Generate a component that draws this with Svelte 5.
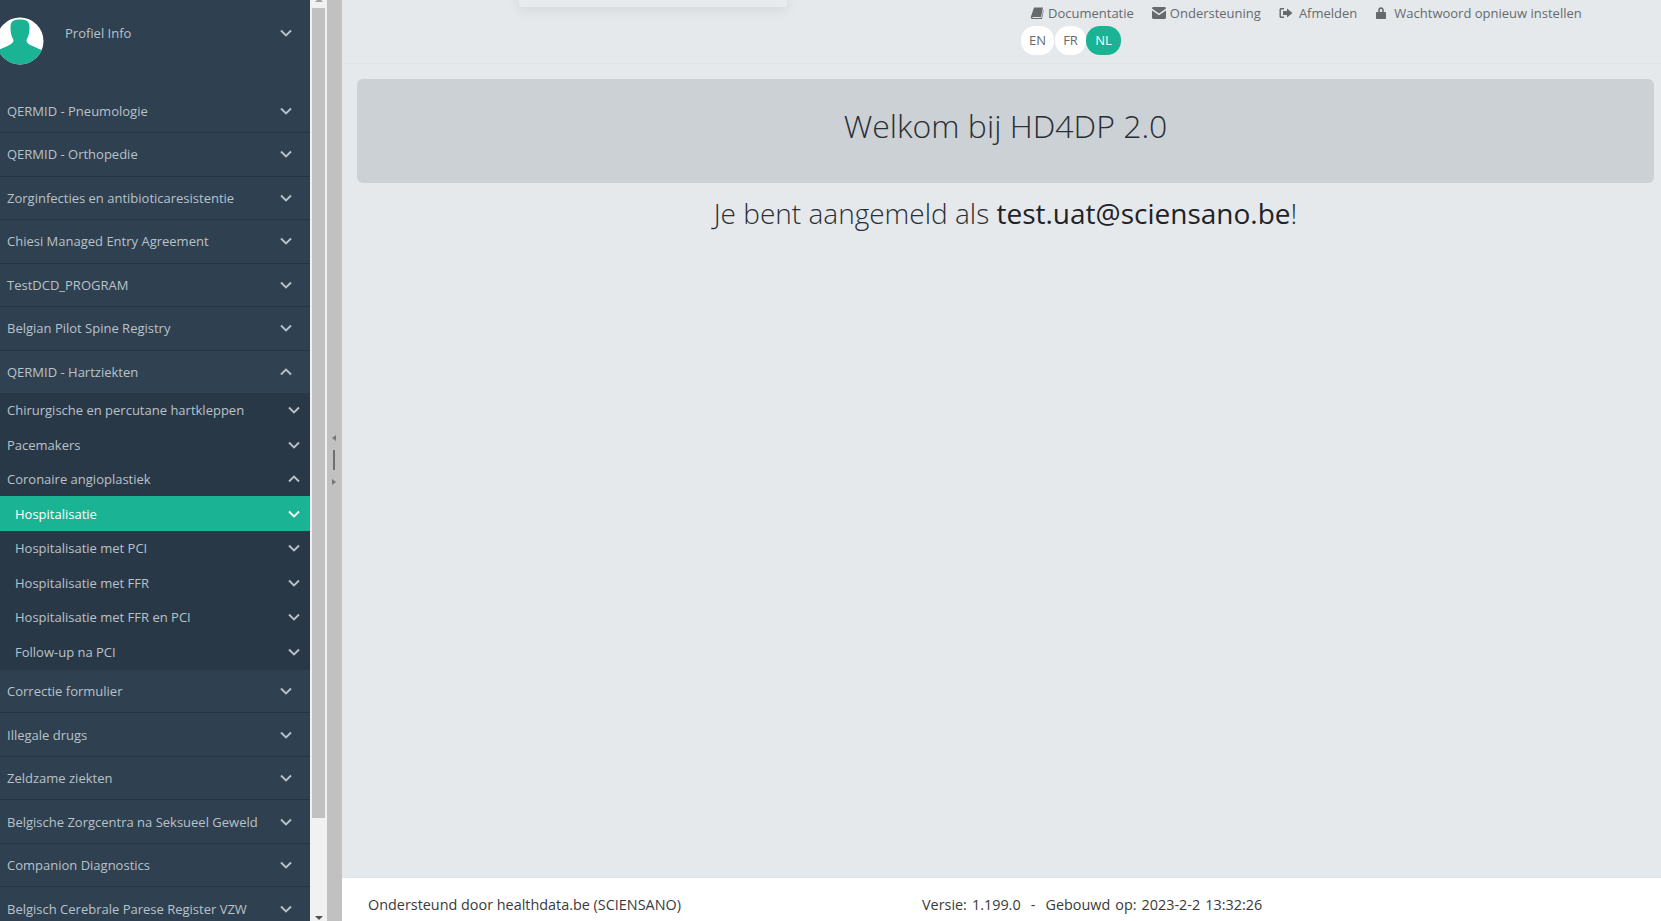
<script>
	const topItems = [
		'QERMID - Pneumologie',
		'QERMID - Orthopedie',
		'Zorginfecties en antibioticaresistentie',
		'Chiesi Managed Entry Agreement',
		'TestDCD_PROGRAM',
		'Belgian Pilot Spine Registry'
	];
	const subItems = [
		{ label: 'Chirurgische en percutane hartkleppen' },
		{ label: 'Pacemakers' },
		{ label: 'Coronaire angioplastiek', open: true },
		{ label: 'Hospitalisatie', nested: true, active: true },
		{ label: 'Hospitalisatie met PCI', nested: true },
		{ label: 'Hospitalisatie met FFR', nested: true },
		{ label: 'Hospitalisatie met FFR en PCI', nested: true },
		{ label: 'Follow-up na PCI', nested: true }
	];
	const bottomItems = [
		'Correctie formulier',
		'Illegale drugs',
		'Zeldzame ziekten',
		'Belgische Zorgcentra na Seksueel Geweld',
		'Companion Diagnostics',
		'Belgisch Cerebrale Parese Register VZW'
	];
</script>

{#snippet chevron(up)}
	<svg class="chevron" viewBox="0 0 12 8" width="12" height="8">
		<polyline points={up ? '1,6.5 6,1.5 11,6.5' : '1,1.5 6,6.5 11,1.5'} fill="none" stroke="currentColor" stroke-width="1.9" />
	</svg>
{/snippet}

<div class="page">
	<aside class="sidebar">
		<div class="profile">
			<svg class="avatar" viewBox="0 0 48 48" width="48" height="48">
				<defs>
					<clipPath id="avatar-clip"><circle cx="24" cy="24" r="23.5" /></clipPath>
				</defs>
				<circle cx="24" cy="24" r="23.5" fill="#fff" />
				<g clip-path="url(#avatar-clip)" fill="#1ab394">
					<path d="M14.5 10 C14.5 4 18 2.5 24 2.5 C30 2.5 33.5 4 33.5 10 C33.5 17 32 20 30.5 23 C30.5 27 34 28 47 33.5 L47 48 L1 48 L1 33.5 C14 28 17.5 27 17.5 23 C16 20 14.5 17 14.5 10 Z" />
				</g>
			</svg>
			<span class="profile-label">Profiel Info</span>
			{@render chevron(false)}
		</div>

		{#each topItems as item}
			<div class="row">
				<span>{item}</span>
				{@render chevron(false)}
			</div>
		{/each}

		<div class="row open">
			<span>QERMID - Hartziekten</span>
			{@render chevron(true)}
		</div>
		<div class="sub">
			{#each subItems as sub}
				<div class="sub-row" class:nested={sub.nested} class:active={sub.active}>
					<span>{sub.label}</span>
					{@render chevron(sub.open)}
				</div>
			{/each}
		</div>

		{#each bottomItems as item}
			<div class="row">
				<span>{item}</span>
				{@render chevron(false)}
			</div>
		{/each}
	</aside>

	<div class="scrollbar">
		<span class="arrow up"></span>
		<div class="thumb"></div>
		<span class="arrow down"></span>
	</div>

	<div class="splitter">
		<span class="tri left"></span>
		<span class="grip"></span>
		<span class="tri right"></span>
	</div>

	<main class="main">
		<div class="popup"></div>
		<header class="topbar">
			<nav class="links">
				<a href="#doc">
					<svg viewBox="0 0 14 14" width="14" height="14"><path fill="currentColor" d="M4 1.5 H13 L11 11 H3 C2.2 11 2 11.8 2.6 12 H11.4 L13.2 4 L13.6 4.5 L12 13 H2.4 C1 13 .6 11.8 1 10.5 Z" /></svg>
					Documentatie
				</a>
				<a href="#support" class="support">
					<svg viewBox="0 0 14 12" width="14" height="12"><path fill="currentColor" d="M0 1.5 C0 .7 .6 0 1.4 0 H12.6 C13.4 0 14 .7 14 1.5 L7 6.5 Z M0 3.4 L7 8.3 L14 3.4 V10.6 C14 11.4 13.4 12 12.6 12 H1.4 C.6 12 0 11.4 0 10.6 Z" /></svg>
					Ondersteuning
				</a>
				<a href="#logout" class="logout">
					<svg viewBox="0 0 14 12" width="14" height="12"><path fill="currentColor" d="M5 1 H2 C1 1 .5 1.6 .5 2.5 V9.5 C.5 10.4 1 11 2 11 H5 V9.6 H2.4 C2 9.6 1.9 9.4 1.9 9 V3 C1.9 2.6 2 2.4 2.4 2.4 H5 Z M8 1.5 L13.5 6 L8 10.5 V8 H4 V4 H8 Z" /></svg>
					Afmelden
				</a>
				<a href="#password" class="password">
					<svg viewBox="0 0 10 12" width="10" height="12"><path fill="currentColor" d="M2.2 5 V3.2 C2.2 1.4 3.4 .3 5 .3 C6.6 .3 7.8 1.4 7.8 3.2 V5 H9 C9.6 5 10 5.4 10 6 V11 C10 11.6 9.6 12 9 12 H1 C.4 12 0 11.6 0 11 V6 C0 5.4 .4 5 1 5 Z M3.8 5 H6.2 V3.3 C6.2 2.4 5.7 1.9 5 1.9 C4.3 1.9 3.8 2.4 3.8 3.3 Z" /></svg>
					Wachtwoord opnieuw instellen
				</a>
			</nav>
			<div class="langs">
				<span class="lang en">EN</span>
				<span class="lang fr">FR</span>
				<span class="lang nl">NL</span>
			</div>
		</header>

		<section class="content">
			<div class="jumbotron">
				<h1>Welkom bij HD4DP 2.0</h1>
			</div>
			<h2>Je bent aangemeld als <strong>test.uat@sciensano.be</strong>!</h2>
		</section>

		<footer class="footer">
			<span class="credit">Ondersteund door healthdata.be (SCIENSANO)</span>
			<span class="build">Versie: 1.199.0 &nbsp;-&nbsp; Gebouwd op: 2023-2-2 13:32:26</span>
		</footer>
	</main>
</div>

<style>
	:global(body) {
		margin: 0;
		overflow: hidden;
	}

	.page {
		display: flex;
		height: 921px;
		overflow: hidden;
		font-family: 'Open Sans', sans-serif;
		font-size: 13px;
		background: #e5e9ec;
	}

	.sidebar {
		width: 310px;
		flex: none;
		height: 921px;
		overflow: hidden;
		background: #2f4050;
		color: #b9c2ca;
	}

	.profile {
		display: flex;
		align-items: center;
		height: 89.5px;
		padding-right: 18px;
		box-sizing: border-box;
		padding-bottom: 24px;
		padding-top: 17px;
	}

	.avatar {
		margin-left: -4px;
		flex: none;
	}

	.profile-label {
		flex: 1;
		margin-left: 21px;
		margin-bottom: 16px;
	}

	.profile .chevron {
		margin-bottom: 16px;
	}

	.row {
		display: flex;
		align-items: center;
		justify-content: space-between;
		height: 43.5px;
		box-sizing: border-box;
		padding: 0 18px 0 7px;
		border-bottom: 1px solid #273442;
	}

	.row.open {
		height: 42.3px;
		border-bottom: none;
		background: #304252;
	}

	.sub {
		padding-bottom: 1.2px;
		background: #293847;
	}

	.sub-row {
		display: flex;
		align-items: center;
		justify-content: space-between;
		height: 34.5px;
		box-sizing: border-box;
		padding: 0 10px 0 7px;
	}

	.sub-row.nested {
		padding-left: 15px;
	}

	.sub-row.active {
		background: #1ab394;
		color: #fff;
	}

	.chevron {
		flex: none;
	}

	.scrollbar {
		width: 17px;
		flex: none;
		box-sizing: border-box;
		padding: 0 2px 0 2px;
		background: #f1f1f1;
		display: flex;
		flex-direction: column;
		align-items: center;
		height: 921px;
	}

	.thumb {
		width: 13px;
		height: 810px;
		margin-top: 6px;
		background: #c1c1c1;
	}

	.arrow {
		width: 0;
		height: 0;
		border-left: 4px solid transparent;
		border-right: 4px solid transparent;
	}

	.arrow.up {
		margin-top: -2px;
		border-bottom: 4px solid #a3a3a3;
	}

	.arrow.down {
		margin-top: auto;
		margin-bottom: 1px;
		border-top: 4px solid #505050;
	}

	.splitter {
		width: 15px;
		box-sizing: border-box;
		padding-right: 1px;
		flex: none;
		background: #c1c1c1;
		display: flex;
		flex-direction: column;
		align-items: center;
		justify-content: center;
		gap: 9px;
		padding-bottom: 1px;
	}

	.grip {
		width: 2px;
		height: 20px;
		background: #6f6f6f;
	}

	.tri {
		width: 0;
		height: 0;
		border-top: 3px solid transparent;
		border-bottom: 3px solid transparent;
	}

	.tri.left {
		border-right: 4px solid #777;
	}

	.tri.right {
		border-left: 4px solid #777;
	}

	.main {
		position: relative;
		flex: 1;
		min-width: 0;
		display: flex;
		flex-direction: column;
	}

	.popup {
		position: absolute;
		left: 177px;
		top: -20px;
		width: 268px;
		height: 27px;
		border-radius: 3px;
		background: #e7ebee;
		box-shadow: 0 4px 14px rgba(0, 0, 0, 0.07);
	}

	.topbar {
		height: 64px;
		box-sizing: border-box;
		border-bottom: 1px solid #dfe3e6;
		padding-left: 679px;
		flex: none;
	}

	.links {
		display: flex;
		align-items: center;
		height: 26px;
		padding-left: 9px;
		color: #676a6c;
	}

	.links a {
		display: flex;
		align-items: center;
		gap: 4px;
		color: inherit;
		text-decoration: none;
		white-space: nowrap;
	}

	.links .support {
		margin-left: 18px;
	}

	.links .logout {
		margin-left: 18px;
		gap: 6px;
	}

	.links .password {
		margin-left: 19px;
		gap: 8px;
	}

	.langs {
		display: flex;
	}

	.lang {
		display: flex;
		align-items: center;
		justify-content: center;
		height: 29px;
		padding-bottom: 1px;
		box-sizing: border-box;
		border-radius: 14px;
		background: #fff;
		color: #676a6c;
	}

	.lang.en {
		width: 33px;
		margin-right: 1px;
	}

	.lang.fr {
		width: 31px;
	}

	.lang.nl {
		width: 35px;
		background: #1ab394;
		color: #fff;
	}

	.content {
		flex: 1;
		padding: 15px 7px 0 15px;
		text-align: center;
		color: #2a2f36;
	}

	.jumbotron {
		height: 104px;
		box-sizing: border-box;
		padding-top: 24px;
		background: #ccd1d5;
		border-radius: 6px;
	}

	h1 {
		margin: 0;
		font-size: 32px;
		font-weight: 300;
		line-height: 45px;
	}

	h2 {
		margin: 10px 0 0;
		font-size: 28px;
		font-weight: 300;
		line-height: 40px;
	}

	h2 strong {
		font-weight: 400;
		color: #1f2226;
	}

	.footer {
		height: 44px;
		flex: none;
		box-sizing: border-box;
		display: flex;
		align-items: center;
		padding: 10px 0 0 26px;
		background: #fff;
		border-top: 1px solid #dfe3e6;
		font-size: 14.4px;
		color: #3a3a3a;
	}

	.credit {
		width: 554px;
	}

	.build {
		word-spacing: 1.3px;
	}
</style>
